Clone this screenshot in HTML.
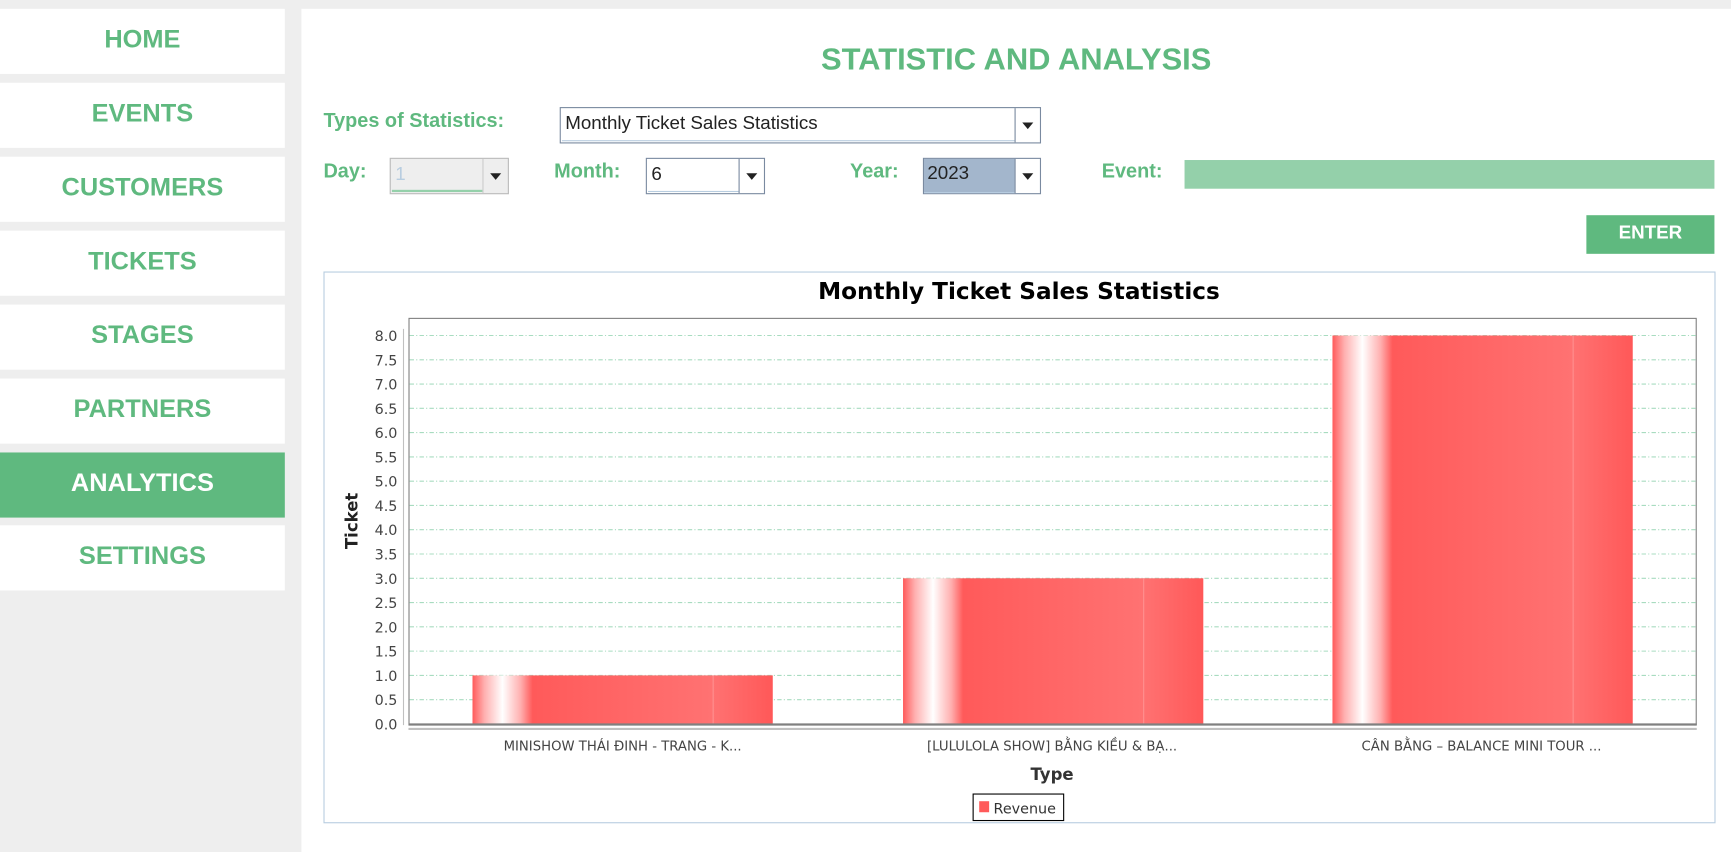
<!DOCTYPE html>
<html><head><meta charset="utf-8"><style>
html,body{margin:0;padding:0;width:1731px;height:852px;overflow:hidden;background:#eeeeee;}
#s{position:absolute;left:0;top:0;width:1568px;height:772px;transform:scale(1.10395,1.1036);transform-origin:0 0;font-family:"Liberation Sans",sans-serif;}
.nb{position:absolute;left:0;width:258px;height:59px;background:#fff;color:#5fb97f;font-weight:bold;font-size:23px;text-align:center;line-height:55px;}
.nb.a{background:#5fb97f;color:#fff;}
#main{position:absolute;left:273px;top:8px;width:1295px;height:764px;background:#fff;}
.lb{position:absolute;color:#5fb97f;font-weight:bold;font-size:18px;}
.cb{position:absolute;border:1px solid #7a8aa0;background:#fff;box-sizing:border-box;}
.cb .t{position:absolute;left:1px;top:1px;bottom:1px;border-bottom:1px solid #b8cde0;font-size:17px;line-height:26px;padding-left:3px;color:#222;}
.cb .ar{position:absolute;right:0;top:0;bottom:0;width:22px;border-left:1px solid #7a8aa0;}
.cb .ar:after{content:"";position:absolute;left:6px;top:13px;border-left:5px solid transparent;border-right:5px solid transparent;border-top:6px solid #222;}
</style></head><body><div id="s">
<div class="nb" style="top:8px">HOME</div>
<div class="nb" style="top:75px">EVENTS</div>
<div class="nb" style="top:142px">CUSTOMERS</div>
<div class="nb" style="top:209px">TICKETS</div>
<div class="nb" style="top:276px">STAGES</div>
<div class="nb" style="top:343px">PARTNERS</div>
<div class="nb a" style="top:410px">ANALYTICS</div>
<div class="nb" style="top:476px">SETTINGS</div>
<div id="main"></div>
<div style="position:absolute;left:273px;width:1295px;top:38px;text-align:center;color:#5fb97f;font-weight:bold;font-size:28px;">STATISTIC AND ANALYSIS</div>
<div class="lb" style="left:293px;top:99px">Types of Statistics:</div>
<div class="cb" style="left:507px;top:97px;width:436px;height:33px"><div class="t" style="right:23px">Monthly Ticket Sales Statistics</div><div class="ar"></div></div>
<div class="lb" style="left:293px;top:145px">Day:</div>
<div class="cb" style="left:353px;top:143px;width:108px;height:33px;background:#eee;border-color:#bbb"><div class="t" style="right:23px;color:#b8cde0;border-bottom:2px solid #94d0aa">1</div><div class="ar" style="border-left-color:#ccc"></div></div>
<div class="lb" style="left:502px;top:145px">Month:</div>
<div class="cb" style="left:585px;top:143px;width:108px;height:33px"><div class="t" style="right:23px">6</div><div class="ar"></div></div>
<div class="lb" style="left:770px;top:145px">Year:</div>
<div class="cb" style="left:836px;top:143px;width:107px;height:33px"><div class="t" style="right:23px;background:#a3b6cc;left:0;top:0;bottom:0;">2023</div><div class="ar"></div></div>
<div class="lb" style="left:998px;top:145px">Event:</div>
<div style="position:absolute;left:1073px;top:145px;width:480px;height:26px;background:#94d0aa"></div>
<div style="position:absolute;left:1437px;top:195px;width:116px;height:35px;background:#5fb97f;color:#fff;font-weight:bold;font-size:17px;text-align:center;line-height:32px">ENTER</div>
<svg style="position:absolute;left:0;top:0" width="1568" height="772" font-family="DejaVu Sans,sans-serif">
<defs>
<linearGradient id="g" x1="0" x2="1" y1="0" y2="0">
<stop offset="0" stop-color="#ff5a5a"/><stop offset="0.04" stop-color="#ffb0b0"/><stop offset="0.1" stop-color="#ffffff"/><stop offset="0.16" stop-color="#ffb0b0"/><stop offset="0.2" stop-color="#ff5a5a"/><stop offset="0.8" stop-color="#ff7272"/><stop offset="1" stop-color="#ff5858"/>
</linearGradient>
</defs>
<rect x="293.5" y="246.5" width="1260" height="499" fill="#fff" stroke="#b8cde0"/>
<text x="923" y="271" text-anchor="middle" font-size="21" font-weight="bold" fill="#000">Monthly Ticket Sales Statistics</text>
<rect x="370.5" y="288.5" width="1166" height="368" fill="#fff" stroke="#808080"/>
<g stroke="#a8dcc0" stroke-dasharray="4,2,1,2">
<line x1="371" x2="1536" y1="304" y2="304"/><line x1="371" x2="1536" y1="326" y2="326"/><line x1="371" x2="1536" y1="348" y2="348"/><line x1="371" x2="1536" y1="370" y2="370"/><line x1="371" x2="1536" y1="392" y2="392"/><line x1="371" x2="1536" y1="414" y2="414"/><line x1="371" x2="1536" y1="436" y2="436"/><line x1="371" x2="1536" y1="458" y2="458"/><line x1="371" x2="1536" y1="480" y2="480"/><line x1="371" x2="1536" y1="502" y2="502"/><line x1="371" x2="1536" y1="524" y2="524"/><line x1="371" x2="1536" y1="546" y2="546"/><line x1="371" x2="1536" y1="568" y2="568"/><line x1="371" x2="1536" y1="590" y2="590"/><line x1="371" x2="1536" y1="612" y2="612"/><line x1="371" x2="1536" y1="634" y2="634"/>
</g>
<rect x="428" y="612" width="272" height="44" fill="url(#g)"/>
<rect x="818" y="524" width="272" height="132" fill="url(#g)"/>
<rect x="1207" y="304" width="272" height="352" fill="url(#g)"/>
<g stroke="#ff9090"><line x1="646" x2="646" y1="612" y2="656"/><line x1="1036" x2="1036" y1="524" y2="656"/><line x1="1425" x2="1425" y1="304" y2="656"/></g>
<line x1="370" x2="1537" y1="656.5" y2="656.5" stroke="#808080" stroke-width="2"/>
<line x1="370" x2="1537" y1="660.5" y2="660.5" stroke="#c0c0c0" stroke-width="2"/>
<line x1="365.5" x2="365.5" y1="298" y2="657" stroke="#c0c0c0"/>
<g font-size="13" fill="#444" text-anchor="end">
<text x="360" y="309">8.0</text><text x="360" y="331">7.5</text><text x="360" y="353">7.0</text><text x="360" y="375">6.5</text><text x="360" y="397">6.0</text><text x="360" y="419">5.5</text><text x="360" y="441">5.0</text><text x="360" y="463">4.5</text><text x="360" y="485">4.0</text><text x="360" y="507">3.5</text><text x="360" y="529">3.0</text><text x="360" y="551">2.5</text><text x="360" y="573">2.0</text><text x="360" y="595">1.5</text><text x="360" y="617">1.0</text><text x="360" y="639">0.5</text><text x="360" y="661">0.0</text>
</g>
<text transform="translate(324,472) rotate(-90)" text-anchor="middle" font-size="15" font-weight="bold" fill="#222">Ticket</text>
<g font-size="12" fill="#444" text-anchor="middle">
<text x="564" y="680">MINISHOW THÁI ĐINH - TRANG - K...</text>
<text x="953" y="680">[LULULOLA SHOW] BẰNG KIỀU &amp; BẠ...</text>
<text x="1342" y="680">CÂN BẰNG – BALANCE MINI TOUR ...</text>
</g>
<text x="953" y="707" text-anchor="middle" font-size="15" font-weight="bold" fill="#333">Type</text>
<rect x="881.5" y="719.5" width="82" height="24" fill="#fff" stroke="#000"/>
<rect x="887" y="726" width="9" height="10" fill="#ff5a5a"/>
<text x="900" y="737" font-size="13" fill="#333">Revenue</text>
</svg>
</div></body></html>
